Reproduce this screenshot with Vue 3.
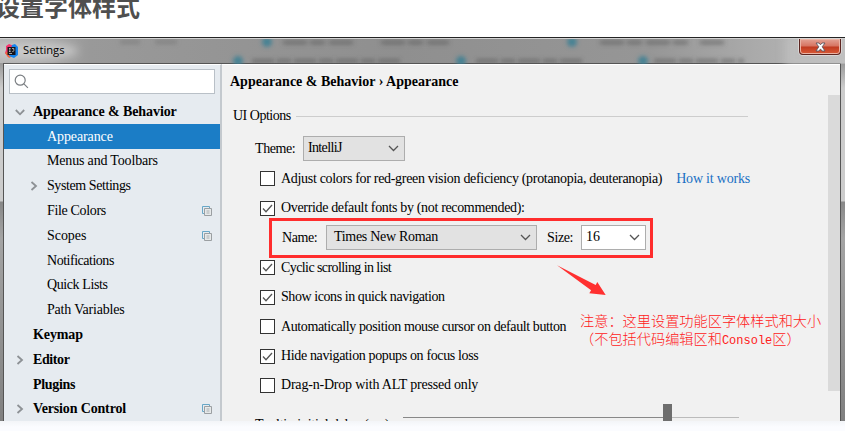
<script setup>
// track: per-label letter tracking in px
const tree = [
  { text: 'Appearance & Behavior', cls: 'bold', arrow: 'down', track: -0.08 },
  { text: 'Appearance', cls: 'sub selected', track: -0.1 },
  { text: 'Menus and Toolbars', cls: 'sub', track: -0.17 },
  { text: 'System Settings', cls: 'sub', arrow: 'right', track: -0.42 },
  { text: 'File Colors', cls: 'sub', copy: true, track: -0.34 },
  { text: 'Scopes', cls: 'sub', copy: true, track: -0.05 },
  { text: 'Notifications', cls: 'sub', track: -0.48 },
  { text: 'Quick Lists', cls: 'sub', track: -0.4 },
  { text: 'Path Variables', cls: 'sub', track: -0.2 },
  { text: 'Keymap', cls: 'bold', track: -0.1 },
  { text: 'Editor', cls: 'bold', arrow: 'right', track: -0.4 },
  { text: 'Plugins', cls: 'bold', track: -0.3 },
  { text: 'Version Control', cls: 'bold', arrow: 'right', copy: true, track: -0.15 },
]
const fontChecks = [
  { text: 'Adjust colors for red-green vision deficiency (protanopia, deuteranopia)', on: false, link: 'How it works', track: -0.31 },
  { text: 'Override default fonts by (not recommended):', on: true, track: -0.34 },
]
const checks = [
  { text: 'Cyclic scrolling in list', on: true, track: -0.58 },
  { text: 'Show icons in quick navigation', on: true, track: -0.43 },
  { text: 'Automatically position mouse cursor on default button', on: false, track: -0.4 },
  { text: 'Hide navigation popups on focus loss', on: true, track: -0.36 },
  { text: 'Drag-n-Drop with ALT pressed only', on: false, track: -0.2 },
]
const tracking = (item) => ({ letterSpacing: item.track + 'px' })
</script>

<template>
  <div class="page">
    <h2 class="heading">设置字体样式</h2>
    <div class="window">
      <header class="titlebar">
        <svg class="glow" width="845" height="25" viewBox="0 0 845 25">
          <defs>
            <filter id="soft" x="-20%" y="-80%" width="140%" height="260%"><feGaussianBlur stdDeviation="4" /></filter>
            <filter id="haze" x="-20%" y="-200%" width="140%" height="500%"><feGaussianBlur stdDeviation="2" /></filter>
          </defs>
          <ellipse cx="36" cy="12" rx="42" ry="9" fill="#d4d4d4" opacity=".7" filter="url(#soft)" />
          <rect x="785" y="-4" width="80" height="34" fill="#c4c4c4" opacity=".6" filter="url(#soft)" />
          <g filter="url(#haze)">
            <path d="M283 3.5h70M381 3.5h68M600 3.5h92M700 3.5h24" stroke="#5c5c5c" stroke-width="4" stroke-dasharray="24 3 15 4" opacity=".6" />
            <path d="M252 22h148M476 22h108M654 22h90" stroke="#5c5c5c" stroke-width="4" stroke-dasharray="22 3 14 3" opacity=".6" />
            <path d="M120 3h20M155 3h22" stroke="#707070" stroke-width="4" opacity=".5" />
            <g fill="#397f94" opacity=".85">
              <circle cx="267" cy="3" r="5" /><circle cx="238" cy="22" r="5" />
              <circle cx="461" cy="22" r="5" /><circle cx="572" cy="3" r="5" /><circle cx="643" cy="22" r="5" />
            </g>
          </g>
        </svg>
        <svg class="logo" width="13" height="14" viewBox="0 0 13 14">
          <path d="M1 2 4 0l5 2-1 9-5 2-3-4 1-3z" fill="#f5366e" />
          <path d="M0 9 4 7l4 5-4 2z" fill="#ef6a3e" />
          <path d="M7 1 10 0l3 3v8l-4 3-5-2z" fill="#1684ee" />
          <path d="M2.5 3h8v8h-8z" fill="#17151b" />
          <path d="M4 4.5h1.6M4.8 4.5v3M4 7.5h1.6M7 4.5h1.8v2.2q0 .9-1.5.8M4 9.5h3" stroke="#ddd" stroke-width=".7" fill="none" />
        </svg>
        <span class="title">Settings</span>
        <div class="close">
          <svg width="11" height="10" viewBox="0 0 11 10">
            <path d="M1 1h3l1.5 1.8L7 1h3L7.2 4.8 10 9H7L5.5 6.9 4 9H1l2.8-4.2z" fill="#fff" stroke="#5b5560" stroke-width=".9" />
          </svg>
        </div>
      </header>
      <div class="body">
        <aside class="sidebar">
          <div class="search">
            <svg width="15" height="15" viewBox="0 0 15 15" fill="none" stroke="#7a7e82" stroke-width="1.2">
              <circle cx="6.2" cy="6.2" r="5" /><path d="m9.9 9.9 4 4" />
            </svg>
          </div>
          <div v-for="t in tree" :key="t.text" class="node" :class="t.cls">
            <svg v-if="t.arrow" class="chev" width="10" height="10" viewBox="0 0 10 10">
              <path :d="t.arrow === 'down' ? 'M.8 3 5 7.3 9.2 3' : 'M2.5 1 7 5 2.5 9'" fill="none" stroke="#8d9195" stroke-width="1.8" />
            </svg>
            <span :style="tracking(t)">{{ t.text }}</span>
            <svg v-if="t.copy" class="copy" width="10" height="10" viewBox="0 0 10 10" fill="none">
              <path d="M2.5 7.5h-2v-7h7v2" stroke="#68a7c7" />
              <path d="M2.5 2.5h7v7h-7z" fill="#e6e9ea" stroke="#9b9fa2" />
              <path d="M4.5 5h3M4.5 7h3" stroke="#9b9fa2" stroke-width=".8" />
            </svg>
          </div>
        </aside>
        <main class="main">
          <div class="crumb">Appearance &amp; Behavior › Appearance</div>
          <div class="section"><span>UI Options</span><i></i></div>
          <div class="theme">
            <span class="lab">Theme:</span>
            <div class="combo theme-combo"><span>IntelliJ</span>
              <svg width="11" height="7" viewBox="0 0 11 7"><path d="m1 1 4.5 4.5L10 1" /></svg>
            </div>
          </div>
          <div v-for="c in fontChecks" :key="c.text" class="check">
            <b class="box"><svg v-if="c.on" width="13" height="13" viewBox="0 0 13 13"><path d="m2 6.5 3 3.2L11 3" /></svg></b>
            <span :style="tracking(c)">{{ c.text }}</span>
            <a v-if="c.link">{{ c.link }}</a>
          </div>
          <div class="fonts">
            <span class="name">Name:</span>
            <div class="combo name-combo"><span>Times New Roman</span>
              <svg width="11" height="7" viewBox="0 0 11 7"><path d="m1 1 4.5 4.5L10 1" /></svg>
            </div>
            <span class="size">Size:</span>
            <div class="combo size-combo"><span>16</span>
              <svg width="11" height="7" viewBox="0 0 11 7"><path d="m1 1 4.5 4.5L10 1" /></svg>
            </div>
          </div>
          <div v-for="c in checks" :key="c.text" class="check">
            <b class="box"><svg v-if="c.on" width="13" height="13" viewBox="0 0 13 13"><path d="m2 6.5 3 3.2L11 3" /></svg></b>
            <span :style="tracking(c)">{{ c.text }}</span>
          </div>
          <div class="delay">
            <span>Tooltip initial delay (ms):</span>
            <div class="slider"><i></i><b></b><i class="rest"></i></div>
          </div>
          <div class="scroll"></div>
          <svg class="pointer" width="50" height="32" viewBox="0 0 50 32">
            <path d="M1 1.3 39.7 21l1.6-3 8.4 13-16.4-1.7 1.8-3z" fill="#ff3030" />
          </svg>
          <p class="note">注意：这里设置功能区字体样式和大小<br>（不包括代码编辑区和<code>Console</code>区）</p>
        </main>
      </div>
    </div>
    <div class="foot"></div>
  </div>
</template>

<style>
body { background: #fff; overflow: hidden; }
</style>
<style scoped>
* { box-sizing: border-box; }
.page { width: 845px; height: 431px; overflow: hidden; display: flex; flex-direction: column; font: 14px/18px "Liberation Serif", "Times New Roman", serif; color: #000; font-variant-ligatures: none; }
.heading { margin: 0 0 0 -4px; height: 37px; font: bold 24px/24px "Noto Sans CJK SC", sans-serif; line-height: 12px; color: #4f4f4f; flex: none; }
.window { height: 384px; flex: none; display: flex; flex-direction: column; overflow: hidden; border-top: 1px solid #252525; background: linear-gradient(#999 0 25px, #ccc 50px, #ccc 163px, #888 164px, #a4a4a4 200px, #808080); }
.titlebar { position: relative; height: 25px; flex: none; display: flex; align-items: center; padding-left: 5px; border-top: 1px solid #d2d2d2; background: linear-gradient(90deg, #b6b6b6, #999 90px, #8f8f8f 400px, #969696 650px, #adadad 770px, #bbb); }
.glow { position: absolute; left: 0; top: 0; }
.logo { position: relative; margin-right: 5px; }
.title { position: relative; top: -1px; font: 11.2px/16px "Open Sans", "Noto Sans", sans-serif; color: #000; }
.close { position: relative; margin-left: auto; margin-right: 4px; align-self: flex-start; width: 42px; height: 16px; display: flex; align-items: center; justify-content: center; border: 1px solid #5d2520; border-top: 0; border-radius: 0 0 4px 4px; background: linear-gradient(#e3a295, #d67461 7px, #c03a20 8px, #d95b38); box-shadow: 0 0 0 1px #d9d5d4, inset 0 0 0 1px #eab3a4; }
.body { flex: 1; margin: 0 4px 0 3px; display: flex; min-height: 0; border: 1px solid #555; border-bottom: 0; }
.sidebar { width: 218px; flex: none; background: #e6ebf0; border-right: 2px solid #c4c9ce; border-top: 1px solid #fff; overflow: hidden; }
.search { height: 25px; width: 206px; margin: 4px 0 5.4px 5px; border: 1px solid #b9c0c7; background: #fff; padding: 4px; }
.node { display: flex; align-items: center; height: 24.8px; padding-left: 43px; }
.bold { font-weight: bold; padding-left: 29px; }
.selected { background: #1b7dc6; color: #fff; }
.chev { margin-left: -18px; margin-right: 8px; flex: none; }
.copy { margin-left: auto; margin-right: 8px; }
.main { position: relative; flex: 1; background: #f1f1f1; border-top: 1px solid #fff; overflow: hidden; padding-left: 8px; }
.crumb { height: 34px; line-height: 33px; font-weight: bold; }
.section { height: 34px; width: 518px; display: flex; align-items: center; padding-left: 3px; letter-spacing: -.5px; }
.section i { height: 1px; background: #cdcdcd; flex: 1; margin-left: 5px; }
.theme { height: 31px; display: flex; align-items: center; padding-left: 25px; letter-spacing: -.4px; }
.lab { width: 48px; }
.combo { display: flex; align-items: center; justify-content: space-between; height: 25px; border: 1px solid #adadad; background: #e2e2e2; padding: 0 5px 1px 4px; }
.combo svg, .box svg { fill: none; stroke: #555; stroke-width: 1.3; }
.theme-combo { width: 102px; letter-spacing: -.65px; }
.check { display: flex; align-items: center; height: 29.4px; padding-left: 30px; }
.box { width: 15px; height: 15px; flex: none; border: 1px solid #333; background: #fff; margin-right: 6px; }
.box svg { display: block; }
.check a { color: #1a70c4; margin-left: 14px; letter-spacing: -.2px; }
.fonts { height: 40px; width: 384px; margin: -5px 0 -4.6px 39px; border: 3px solid #ff2d2d; display: flex; align-items: center; padding-left: 10px; letter-spacing: -.4px; }
.name { width: 44px; }
.name-combo { width: 211px; padding-left: 7px; letter-spacing: -.3px; }
.size { width: 34px; margin-left: 10px; }
.size-combo { width: 65px; background: #fff; letter-spacing: 0; }
.delay { display: flex; padding-left: 25px; }
.delay span { width: 148px; padding-top: 16px; white-space: nowrap; letter-spacing: -.2px; }
.slider { display: flex; align-items: center; height: 27px; margin-top: 4px; }
.slider i { width: 260px; height: 1px; background: #888; }
.slider b { width: 9px; height: 27px; background: #6e6e6e; }
.slider .rest { width: 67px; background: #bbb; }
.scroll { position: absolute; right: 0; top: 30px; width: 12px; height: 296px; background: #dadada; }
.pointer { position: absolute; left: 334px; top: 199px; }
.note { position: absolute; left: 358px; top: 246px; margin: 0; font: 300 14.2px/18px "Noto Sans CJK SC", sans-serif; color: #ff2020; white-space: nowrap; }
.note code { font: 12px/1 "Liberation Mono", monospace; }
.foot { flex: 1; background: linear-gradient(#f3f5f8, #fbfcff 6px); }
</style>
